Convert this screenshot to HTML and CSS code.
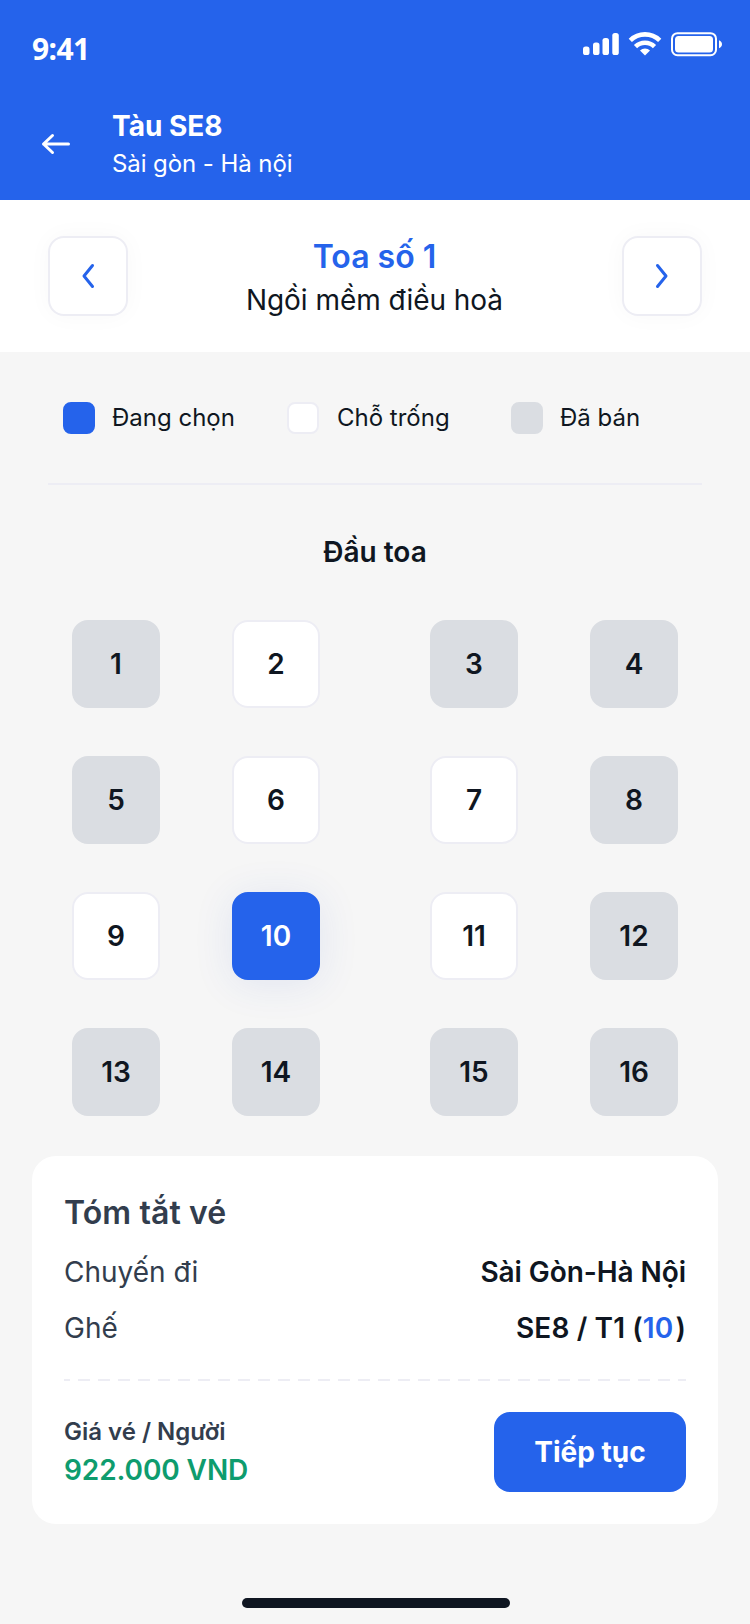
FILE: index.html
```html
<!DOCTYPE html>
<html lang="vi">
<head>
    <meta charset="UTF-8">
    <meta name="viewport" content="width=device-width, initial-scale=1.0">
    <title>Tàu SE8</title>
    <link rel="stylesheet" href="styles.css">
</head>
<body>
    <!-- Header -->
    <header class="header">
        <div class="status-bar">
            <span class="time">9:41</span>
            <svg class="status-icons" width="140" height="24" viewBox="0 0 140 24" fill="#fff">
                <rect x="0" y="13.5" width="6.5" height="8.5" rx="2.6"/>
                <rect x="10" y="9.5" width="6.5" height="12.5" rx="2.6"/>
                <rect x="19.5" y="5" width="6.5" height="17" rx="2.6"/>
                <rect x="29.3" y="0" width="6.5" height="22" rx="2.6"/>
                <g fill="none" stroke="#fff" stroke-width="4.6">
                    <path d="M47.3 7.4a21 21 0 0 1 29.4 0"/>
                    <path d="M52.5 13.6a13.6 13.6 0 0 1 19 0"/>
                </g>
                <path d="M57 17.5a7.4 7.4 0 0 1 10 0l-5 5z"/>
                <rect x="89" y="0.2" width="44" height="22" rx="5.5" fill="none" stroke="#fff" stroke-width="2"/>
                <rect x="92" y="3" width="38" height="16.4" rx="3.5"/>
                <path d="M136 7.2c4 1.6 4 6.4 0 8z"/>
            </svg>
        </div>
        <div class="nav">
            <svg class="back" width="32" height="24" viewBox="0 0 32 24" fill="none" stroke="#fff" stroke-width="3" stroke-linecap="round" stroke-linejoin="round">
                <path d="M28.5 12H3.5M12.5 3.5L3.5 12l9 8.5"/>
            </svg>
            <div class="nav-text">
                <h1>Tàu SE8</h1>
                <p>Sài gòn - Hà nội</p>
            </div>
        </div>
    </header>

    <!-- Carriage picker -->
    <section class="carriage">
        <button class="arrow-btn">
            <svg width="16" height="28" viewBox="0 0 16 28"><path d="M12.5 3.5L4 14l8.5 10.5"/></svg>
        </button>
        <div class="carriage-text">
            <h2>Toa số 1</h2>
            <p>Ngồi mềm điều hoà</p>
        </div>
        <button class="arrow-btn">
            <svg width="16" height="28" viewBox="0 0 16 28"><path d="M3.5 3.5L12 14 3.5 24.5"/></svg>
        </button>
    </section>

    <!-- Seat status legend -->
    <div class="legend">
        <div class="legend-item"><span class="box selected"></span>Đang chọn</div>
        <div class="legend-item"><span class="box"></span>Chỗ trống</div>
        <div class="legend-item"><span class="box sold"></span>Đã bán</div>
    </div>

    <h3 class="seats-title">Đầu toa</h3>
    <div class="seats">
        <button class="seat sold">1</button>
        <button class="seat">2</button>
        <button class="seat sold">3</button>
        <button class="seat sold">4</button>
        <button class="seat sold">5</button>
        <button class="seat">6</button>
        <button class="seat">7</button>
        <button class="seat sold">8</button>
        <button class="seat">9</button>
        <button class="seat selected">10</button>
        <button class="seat">11</button>
        <button class="seat sold">12</button>
        <button class="seat sold">13</button>
        <button class="seat sold">14</button>
        <button class="seat sold">15</button>
        <button class="seat sold">16</button>
    </div>

    <!-- Ticket summary -->
    <section class="summary">
        <h3>Tóm tắt vé</h3>
        <div class="row">
            <span>Chuyến đi</span>
            <strong class="route">Sài Gòn-Hà Nội</strong>
        </div>
        <div class="row">
            <span>Ghế</span>
            <strong>SE8 / T1 (<em>10</em>)</strong>
        </div>
        <div class="dashes"></div>
        <div class="checkout">
            <div class="total">
                <p class="price-label">Giá vé / Người</p>
                <p class="price">922.000 VND</p>
            </div>
            <button class="next-btn">Tiếp tục</button>
        </div>
    </section>

    <div class="home-bar"></div>
</body>
</html>
```
FILE: styles.css
```css
* {
    box-sizing: border-box;
}
body {
    margin: 0;
    width: 750px;
    height: 1624px;
    overflow: hidden;
    background-color: #f6f6f6;
    color: #0f1621;
    font-family: Inter, "Noto Sans", sans-serif;
    font-size: 28px;
}
h1, h2, h3, p {
    margin: 0;
}
button {
    font-family: inherit;
    padding: 0;
}
svg {
    display: block;
}

/* Header */
.header {
    height: 200px;
    background-color: #2563eb;
    color: white;
}
.status-bar {
    display: flex;
    justify-content: space-between;
    align-items: flex-start;
    height: 104px;
    padding: 33px 27px 0 32px;
}
.time {
    font-family: "Noto Sans", sans-serif;
    font-size: 30px;
    font-weight: 700;
    line-height: 32px;
    letter-spacing: -0.6px;
}
.status-bar .status-icons {
    overflow: visible;
}
.nav {
    display: flex;
    align-items: center;
    padding-left: 40px;
}
.back {
    margin-right: 40px;
    margin-top: 4px;
}
.nav h1 {
    font-size: 28px;
    font-weight: 700;
    line-height: 44px;
}
.nav p {
    font-size: 24px;
    line-height: 32px;
    letter-spacing: -0.08px;
}

/* Carriage picker */
.carriage {
    display: flex;
    justify-content: space-between;
    align-items: center;
    height: 152px;
    padding: 0 48px;
    background-color: white;
    text-align: center;
}
.carriage-text {
    padding: 5px 1px 0 0;
}
.carriage h2 {
    font-size: 32px;
    font-weight: 600;
    line-height: 44px;
    color: #2563eb;
}
.carriage p {
    font-size: 28px;
    line-height: 43px;
    letter-spacing: -0.05px;
}
.arrow-btn {
    display: flex;
    justify-content: center;
    align-items: center;
    width: 80px;
    height: 80px;
    border: 2px solid #ededf4;
    border-radius: 16px;
    background-color: white;
    box-shadow: 0 0 24px rgba(15, 22, 33, 0.03);
}
.arrow-btn path {
    fill: none;
    stroke: #2563eb;
    stroke-width: 3;
    stroke-linecap: round;
    stroke-linejoin: round;
}

/* Legend */
.legend {
    display: grid;
    grid-template-columns: 224px 224px 1fr;
    align-items: center;
    height: 133px;
    margin: 0 48px;
    padding-left: 15px;
    border-bottom: 2px solid #ededf4;
}
.legend-item {
    display: flex;
    align-items: center;
    gap: 17px;
    font-size: 24px;
    line-height: 32px;
}
.legend-item:nth-child(2) {
    gap: 18px;
}
.box {
    width: 32px;
    height: 32px;
    border: 2px solid #ededf4;
    border-radius: 8px;
    background-color: white;
}

/* Seats */
.seats-title {
    margin-top: 45px;
    font-size: 28px;
    font-weight: 600;
    line-height: 44px;
    text-align: center;
}
.seats {
    display: grid;
    grid-template-columns: 160px 198px 160px 88px;
    row-gap: 48px;
    margin: 46px 72px 0;
}
.seat {
    width: 88px;
    height: 88px;
    border: 2px solid #ededf4;
    border-radius: 16px;
    background-color: white;
    color: #0f1621;
    font-size: 28px;
    font-weight: 600;
    line-height: 44px;
}
.sold {
    background-color: #dadde2;
    border-color: #dadde2;
}
.selected {
    background-color: #2563eb;
    border-color: #2563eb;
    color: white;
}
.seat.selected {
    box-shadow: 0 4px 40px rgba(37, 80, 200, 0.1);
}

/* Summary card */
.summary {
    height: 368px;
    margin: 40px 32px 0;
    padding: 35px 32px 0;
    border-radius: 24px;
    background-color: white;
}
.summary h3 {
    font-size: 32px;
    font-weight: 600;
    line-height: 44px;
    letter-spacing: 0.1px;
    color: #323d4d;
}
.row {
    display: flex;
    justify-content: space-between;
    margin-top: 15px;
    line-height: 44px;
    color: #323d4d;
}
.row + .row {
    margin-top: 12px;
}
.row strong {
    font-weight: 600;
    letter-spacing: 0.12px;
    color: #0f1621;
}
.row .route {
    letter-spacing: -0.07px;
}
.row em {
    margin-right: 2px;
    font-style: normal;
    color: #2563eb;
}
.dashes {
    height: 2px;
    margin-top: 29px;
    background: repeating-linear-gradient(to right, #ededf4 0 6px, transparent 6px 14px, #ededf4 14px 20px);
}
.checkout {
    display: flex;
    justify-content: space-between;
    align-items: center;
    margin-top: 31px;
}
.total {
    padding-top: 4px;
}
.price-label {
    font-size: 24px;
    font-weight: 600;
    line-height: 32px;
    color: #323d4d;
}
.price {
    font-weight: 600;
    line-height: 44px;
    letter-spacing: -0.1px;
    color: #0e9c6e;
}
.next-btn {
    width: 192px;
    height: 80px;
    border: none;
    border-radius: 16px;
    background-color: #2563eb;
    color: white;
    font-size: 28px;
    font-weight: 700;
}

.home-bar {
    width: 268px;
    height: 10px;
    margin: 74px 0 0 242px;
    border-radius: 5px;
    background-color: #0f1621;
}
```
